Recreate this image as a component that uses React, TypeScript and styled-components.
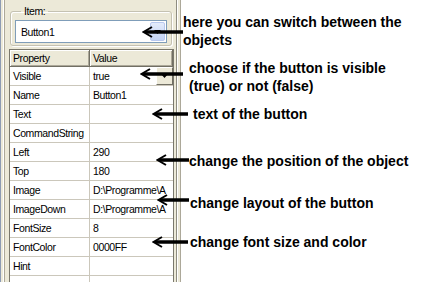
import { FC, Fragment } from "react";
import styled, { createGlobalStyle } from "styled-components";

const GlobalStyle = createGlobalStyle`
  html, body {
    margin: 0;
    padding: 0;
    background: #fff;
  }
  body {
    width: 421px;
    height: 282px;
    overflow: hidden;
  }
`;

const Screen = styled.div`
  display: flex;
  width: 421px;
  height: 282px;
  overflow: hidden;
  background: #fff;
  font-family: "Liberation Sans", Arial, sans-serif;
`;

// left property panel
const Panel = styled.div`
  width: 174px;
  flex: none;
  display: flex;
  flex-direction: column;
  box-sizing: border-box;
  padding-left: 5px;
  background: linear-gradient(
    to right,
    #8d9bb3 0 1px,
    #ece9d8 1px 3px,
    #ffffff 3px 4px,
    #aca899 4px 5px,
    #ece9d8 5px
  );
  font-size: 10.5px;
  letter-spacing: -0.4px;
  color: #000;
`;

const Group = styled.fieldset`
  margin: 5px 2px 0 5px;
  padding: 2px 4px 2px 4px;
  border: 1px solid #c5c2b2;
  border-radius: 3px;
  box-shadow: inset 1px 1px 0 #fff, 1px 1px 0 #fff;
`;

const Legend = styled.legend`
  margin-left: 6px;
  padding: 0 3px;
  line-height: 13px;
`;

const Combo = styled.div`
  display: flex;
  align-items: center;
  height: 23px;
  box-sizing: border-box;
  padding-left: 5px;
  border: 1px solid #7f9db9;
  background: #fff;
`;

const ComboText = styled.span`
  flex: 1;
`;

const ComboButton = styled.div`
  align-self: stretch;
  width: 15px;
  margin: 1px;
  border-radius: 2px;
  background: linear-gradient(#e4ecfb, #c3d3f5);
  border: 1px solid #b9c9ef;
  box-sizing: border-box;
  display: flex;
  align-items: center;
  justify-content: center;
`;

const Grid = styled.div`
  flex: 1;
  margin: 3px 0 0 4px;
  display: grid;
  grid-template-columns: 80px 1fr;
  grid-template-rows: 17px;
  grid-auto-rows: 19px;
  align-content: start;
  border: 1px solid #7a786c;
  border-bottom: none;
  background: #fff;
`;

const HeadCell = styled.div`
  display: flex;
  align-items: center;
  padding-left: 3px;
  background: #ece9d8;
  border-right: 1px solid #716f64;
  border-bottom: 1px solid #716f64;
  box-shadow: inset 1px 1px 0 #fff, inset -1px -1px 0 #aca899;
`;

const Cell = styled.div<{ $name?: boolean }>`
  display: flex;
  align-items: center;
  justify-content: space-between;
  padding-left: 3px;
  border-bottom: 1px solid #cbc7bb;
  border-right: ${({ $name }) => ($name ? "1px solid #cbc7bb" : "none")};
  white-space: nowrap;
  overflow: hidden;
`;

const PickButton = styled.div`
  align-self: stretch;
  width: 17px;
  flex: none;
  box-sizing: border-box;
  background: #ece9d8;
  border: 1px solid;
  border-color: #fff #716f64 #716f64 #fff;
  display: flex;
  align-items: center;
  justify-content: center;
`;

const Splitter = styled.div`
  width: 7px;
  flex: none;
  background: linear-gradient(
    to right,
    #ece9d8 0 2px,
    #8e8c80 2px 3px,
    #ffffff 3px 4px,
    #ece9d8 4px 6px,
    #aca899 6px 7px
  );
`;

// right column with the explanations
const Notes = styled.div`
  flex: 1;
  display: flex;
  flex-direction: column;
  padding-top: 13px;
`;

const Note = styled.div<{ $indent: number; $gap: number }>`
  position: relative;
  margin-top: ${({ $gap }) => $gap}px;
  padding-left: ${({ $indent }) => $indent}px;
  font-size: 14px;
  font-weight: bold;
  line-height: 18px;
  color: #000;
  white-space: nowrap;
`;

const ArrowSvg = styled.svg<{ $x: number; $y: number }>`
  position: absolute;
  left: ${({ $x }) => $x}px;
  top: ${({ $y }) => $y - 6}px;
`;

const Arrow: FC<{ x: number; y: number; length: number }> = ({ x, y, length }) => (
  <ArrowSvg $x={x} $y={y} width={length} height={12} viewBox={`0 0 ${length} 12`}>
    <line x1={3} y1={6} x2={length} y2={6} stroke="#000" strokeWidth={3.5} />
    <polyline points="10,1 1.5,6 10,11" fill="none" stroke="#000" strokeWidth={2} />
  </ArrowSvg>
);

const Triangle = () => (
  <svg width={7} height={4} viewBox="0 0 7 4">
    <path d="M0 0h7L3.5 4z" fill="#000" />
  </svg>
);

type Prop = { name: string; value: string; pick?: boolean };

const props: Prop[] = [
  { name: "Visible", value: "true", pick: true },
  { name: "Name", value: "Button1" },
  { name: "Text", value: "" },
  { name: "CommandString", value: "" },
  { name: "Left", value: "290" },
  { name: "Top", value: "180" },
  { name: "Image", value: "D:\\Programme\\A" },
  { name: "ImageDown", value: "D:\\Programme\\A" },
  { name: "FontSize", value: "8" },
  { name: "FontColor", value: "0000FF" },
  { name: "Hint", value: "" },
];

type NoteData = {
  lines: string[];
  indent: number;
  gap: number;
  arrowX: number;
  arrowY: number;
  arrowLen: number;
};

const notes: NoteData[] = [
  { lines: ["here you can switch between the", "objects"], indent: 2, gap: 0, arrowX: -39, arrowY: 19, arrowLen: 41 },
  { lines: ["choose if the button is visible", "(true) or not (false)"], indent: 8, gap: 10, arrowX: -41, arrowY: 15, arrowLen: 43 },
  { lines: ["text of the button"], indent: 12, gap: 10, arrowX: -29, arrowY: 9, arrowLen: 36 },
  { lines: ["change the position of the object"], indent: 8, gap: 29, arrowX: -25, arrowY: 8, arrowLen: 33 },
  { lines: ["change layout of the button"], indent: 9, gap: 24, arrowX: -24, arrowY: 6, arrowLen: 32 },
  { lines: ["change font size and color"], indent: 9, gap: 21, arrowX: -29, arrowY: 9, arrowLen: 36 },
];

const App: FC = () => {
  return (
    <>
      <GlobalStyle />
      <Screen>
        <Panel>
          <Group>
            <Legend>Item:</Legend>
            <Combo>
              <ComboText>Button1</ComboText>
              <ComboButton>
                <Triangle />
              </ComboButton>
            </Combo>
          </Group>
          <Grid>
            <HeadCell>Property</HeadCell>
            <HeadCell>Value</HeadCell>
            {props.map((p) => (
              <Fragment key={p.name}>
                <Cell $name>{p.name}</Cell>
                <Cell>
                  <span>{p.value}</span>
                  {p.pick && (
                    <PickButton>
                      <Triangle />
                    </PickButton>
                  )}
                </Cell>
              </Fragment>
            ))}
            <Cell $name />
            <Cell />
          </Grid>
        </Panel>
        <Splitter />
        <Notes>
          {notes.map((n, i) => (
            <Note key={i} $indent={n.indent} $gap={n.gap}>
              {n.lines.map((l, j) => (
                <div key={j}>{l}</div>
              ))}
              <Arrow x={n.arrowX} y={n.arrowY} length={n.arrowLen} />
            </Note>
          ))}
        </Notes>
      </Screen>
    </>
  );
};

export default App;
